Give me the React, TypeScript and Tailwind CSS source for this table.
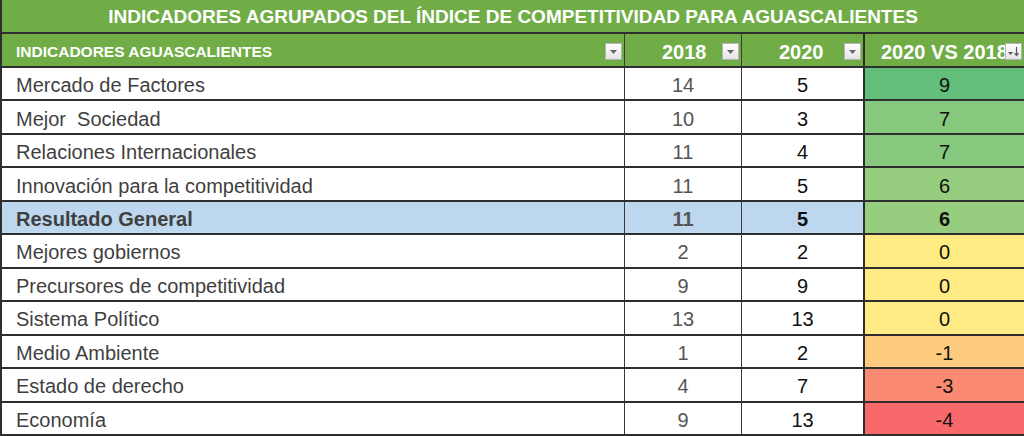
import React from "react";

type Row = { name: string; a: number; b: number; d: number; bg: string; bold?: boolean };

const rows: Row[] = [
  { name: "Mercado de Factores", a: 14, b: 5, d: 9, bg: "bg-[#63be7b]" },
  { name: "Mejor  Sociedad", a: 10, b: 3, d: 7, bg: "bg-[#86c87d]" },
  { name: "Relaciones Internacionales", a: 11, b: 4, d: 7, bg: "bg-[#86c87d]" },
  { name: "Innovación para la competitividad", a: 11, b: 5, d: 6, bg: "bg-[#97cd7e]" },
  { name: "Resultado General", a: 11, b: 5, d: 6, bg: "bg-[#97cd7e]", bold: true },
  { name: "Mejores gobiernos", a: 2, b: 2, d: 0, bg: "bg-[#ffeb84]" },
  { name: "Precursores de competitividad", a: 9, b: 9, d: 0, bg: "bg-[#ffeb84]" },
  { name: "Sistema Político", a: 13, b: 13, d: 0, bg: "bg-[#ffeb84]" },
  { name: "Medio Ambiente", a: 1, b: 2, d: -1, bg: "bg-[#fdca7e]" },
  { name: "Estado de derecho", a: 4, b: 7, d: -3, bg: "bg-[#fa8a71]" },
  { name: "Economía", a: 9, b: 13, d: -4, bg: "bg-[#f8696b]" },
];

function FilterButton({ sorted }: { sorted?: boolean }) {
  return (
    <span className="absolute right-[2px] top-[9px] flex h-[17px] w-[17px] items-center justify-center border border-[#b4b4b4] bg-gradient-to-b from-[#ffffff] to-[#e4e4e4]">
      {sorted ? (
        <svg width="13" height="11" viewBox="0 0 13 11">
          <path d="M1 6h5l-2.5 3z" fill="#555" />
          <path d="M9.5 1v8M7.5 7l2 2.5 2-2.5" stroke="#555" strokeWidth="1.2" fill="none" />
        </svg>
      ) : (
        <svg width="9" height="6" viewBox="0 0 9 6">
          <path d="M1 1h7l-3.5 4z" fill="#666" />
        </svg>
      )}
    </span>
  );
}

export default function App() {
  return (
    <div className="h-[436px] w-[1024px] overflow-hidden bg-white font-['Liberation_Sans',sans-serif]">
      {/* titulo */}
      <div className="flex h-[34px] items-center justify-center border-b-2 border-l-2 border-[#2e2e2e] bg-[#70ad47] pt-[3px] text-[19px] font-bold text-white">
        INDICADORES AGRUPADOS DEL ÍNDICE DE COMPETITIVIDAD PARA AGUASCALIENTES
      </div>
      {/* encabezados */}
      <div className="grid h-[34px] grid-cols-[623px_117px_123px_1fr] border-b-2 border-l-2 border-[#2e2e2e] bg-[#70ad47] font-bold text-white">
        <div className="relative flex items-center border-r border-[#3a3a3a] pl-[14px] pt-[3px] text-[15.5px]">
          INDICADORES AGUASCALIENTES
          <FilterButton />
        </div>
        <div className="relative flex items-center border-r border-[#3a3a3a] pl-[37px] pt-[3px] text-[20px]">
          2018
          <FilterButton />
        </div>
        <div className="relative flex items-center border-r-2 border-[#2e2e2e] pl-[37px] pt-[3px] text-[20px]">
          2020
          <FilterButton />
        </div>
        <div className="relative flex items-center pl-[16px] pt-[3px] text-[20px]">
          2020 VS 2018
          <FilterButton sorted />
        </div>
      </div>
      {/* filas */}
      <div className="flex h-[368px] flex-col">
        {rows.map((r) => (
          <div
            key={r.name}
            className={`grid min-h-0 flex-1 basis-0 grid-cols-[623px_117px_123px_1fr] border-b-2 border-l-2 border-[#2e2e2e] text-[20px] leading-[22px] ${
              r.bold ? "bg-[#bdd7ee] font-bold" : ""
            }`}
          >
            <div className="flex items-center whitespace-pre border-r border-[#3a3a3a] pl-[14px] pt-[3px] text-[#3f3f3f]">
              {r.name}
            </div>
            <div className="flex items-center justify-center border-r border-[#3a3a3a] pt-[3px] text-[#555555]">{r.a}</div>
            <div className="flex items-center justify-center border-r-2 border-[#2e2e2e] pt-[3px] text-[#111111]">{r.b}</div>
            <div className={`flex items-center justify-center pt-[3px] text-[#111111] ${r.bg}`}>{r.d}</div>
          </div>
        ))}
      </div>
    </div>
  );
}
